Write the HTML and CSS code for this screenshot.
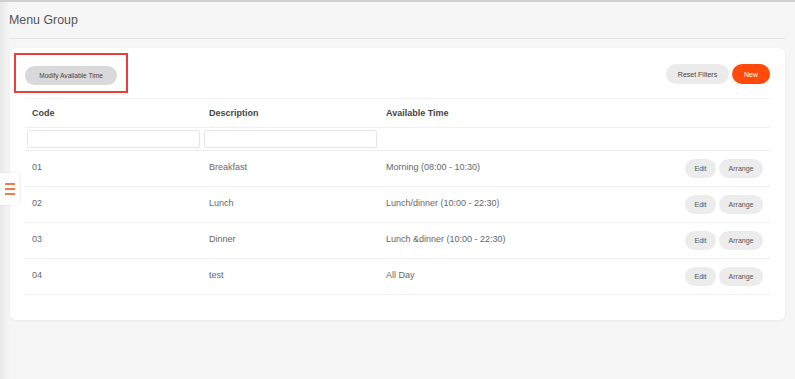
FILE: index.html
```html
<!DOCTYPE html>
<html lang="en">
<head>
    <meta charset="UTF-8">
    <meta name="viewport" content="width=device-width, initial-scale=1.0">
    <title>Menu Group</title>
    <link rel="stylesheet" href="styles.css">
</head>
<body>
    <div class="side-tab">
        <span class="bar"></span>
        <span class="bar"></span>
        <span class="bar"></span>
    </div>
    <div class="page">
        <header class="page-header">
            <h1>Menu Group</h1>
        </header>
        <div class="card">
            <div class="toolbar">
                <div class="highlight">
                    <button class="pill pill-grey">Modify Available Time</button>
                </div>
                <div class="toolbar-right">
                    <button class="pill pill-light">Reset Filters</button>
                    <button class="pill pill-orange">New</button>
                </div>
            </div>
            <table class="grid">
                <thead>
                    <tr class="head-row">
                        <th>Code</th>
                        <th>Description</th>
                        <th>Available Time</th>
                        <th></th>
                    </tr>
                    <tr class="filter-row">
                        <td><input type="text" class="filter"></td>
                        <td><input type="text" class="filter"></td>
                        <td></td>
                        <td></td>
                    </tr>
                </thead>
                <tbody>
                    <tr>
                        <td>01</td>
                        <td>Breakfast</td>
                        <td>Morning (08:00 - 10:30)</td>
                        <td class="actions"><button class="small">Edit</button><button class="small">Arrange</button></td>
                    </tr>
                    <tr>
                        <td>02</td>
                        <td>Lunch</td>
                        <td>Lunch/dinner (10:00 - 22:30)</td>
                        <td class="actions"><button class="small">Edit</button><button class="small">Arrange</button></td>
                    </tr>
                    <tr>
                        <td>03</td>
                        <td>Dinner</td>
                        <td>Lunch &amp;dinner (10:00 - 22:30)</td>
                        <td class="actions"><button class="small">Edit</button><button class="small">Arrange</button></td>
                    </tr>
                    <tr>
                        <td>04</td>
                        <td>test</td>
                        <td>All Day</td>
                        <td class="actions"><button class="small">Edit</button><button class="small">Arrange</button></td>
                    </tr>
                </tbody>
            </table>
        </div>
    </div>
</body>
</html>
```

FILE: styles.css
```css
html, body {
    height: 100%;
}
body {
    font-family: "Liberation Sans", Arial, sans-serif;
    background: linear-gradient(to right, #e8e8e8 0, #f1f1f1 6px, #f6f6f6 10px);
    border-top: 2px solid #cfcfcf;
    margin: 0;
    padding: 0;
    box-sizing: border-box;
    color: #555;
}
.page {
    padding: 0 10px 0 9px;
}
.page-header {
    height: 36px;
    border-bottom: 1px solid #e4e4e4;
    display: flex;
    align-items: center;
}
.page-header h1 {
    margin: 0;
    font-size: 12.4px;
    font-weight: normal;
    color: #555;
}
.card {
    background-color: #ffffff;
    margin: 9px 0 0 1px;
    padding: 0 15px 25px 15px;
    border-radius: 6px;
    box-shadow: 0 1px 3px rgba(0, 0, 0, 0.06);
}
.toolbar {
    display: flex;
    justify-content: space-between;
    align-items: center;
    padding-top: 5px;
}
.highlight {
    border: 2px solid #ee3b3b;
    margin-left: -11px;
    padding: 9px 9px 6px 9px;
    width: 92px;
}
.toolbar-right {
    display: flex;
    gap: 3px;
    padding-top: 2px;
}
.pill {
    border: none;
    border-radius: 10px;
    height: 20px;
    font-family: inherit;
    font-size: 7px;
    padding: 0;
    cursor: pointer;
}
.pill-grey {
    background-color: #d9d9d9;
    color: #444;
    width: 92px;
    height: 19px;
    font-size: 6.6px;
}
.pill-light {
    background-color: #ebebeb;
    color: #444;
    width: 63px;
}
.pill-orange {
    background-color: #ff4a0c;
    color: #ffffff;
    width: 38px;
}
.grid {
    width: 100%;
    border-collapse: collapse;
    margin-top: 5px;
    font-size: 9px;
}
.grid th {
    text-align: left;
    font-weight: bold;
    color: #444;
    padding: 0 7px 1px 7px;
    height: 27px;
    border-top: 1px solid #f3f3f3;
    border-bottom: 1px solid #efefef;
}
.grid th:nth-child(1),
.grid th:nth-child(2),
.grid th:nth-child(3) {
    width: 163px;
}
.filter-row td {
    padding: 2px;
    height: 18px;
    border-bottom: 1px solid #ececec;
}
.filter {
    display: block;
    width: 100%;
    height: 18px;
    box-sizing: border-box;
    border: 1px solid #e6e6e6;
    border-radius: 2px;
    margin: 0;
}
.grid tbody td {
    height: 31px;
    padding: 0 7px 4px 7px;
    color: #666;
    border-bottom: 1px solid #efefef;
}
.grid tbody td.actions {
    text-align: right;
    white-space: nowrap;
    padding: 0 7px 0 0;
}
.small {
    border: none;
    border-radius: 10px;
    background-color: #ececec;
    color: #555;
    font-family: inherit;
    font-size: 7px;
    height: 19px;
    padding: 0;
    margin-left: 3px;
    cursor: pointer;
}
.small:first-child {
    width: 31px;
}
.small:last-child {
    width: 44px;
}
.side-tab {
    position: absolute;
    left: 0;
    top: 173px;
    width: 19px;
    height: 32px;
    background-color: #ffffff;
    box-shadow: 1px 0 3px rgba(0, 0, 0, 0.08);
    border-radius: 0 2px 2px 0;
    display: flex;
    flex-direction: column;
    justify-content: center;
    gap: 3px;
    padding-left: 5px;
    box-sizing: border-box;
}
.side-tab .bar {
    display: block;
    width: 10px;
    height: 2px;
    background-color: #f27a4c;
}
```
